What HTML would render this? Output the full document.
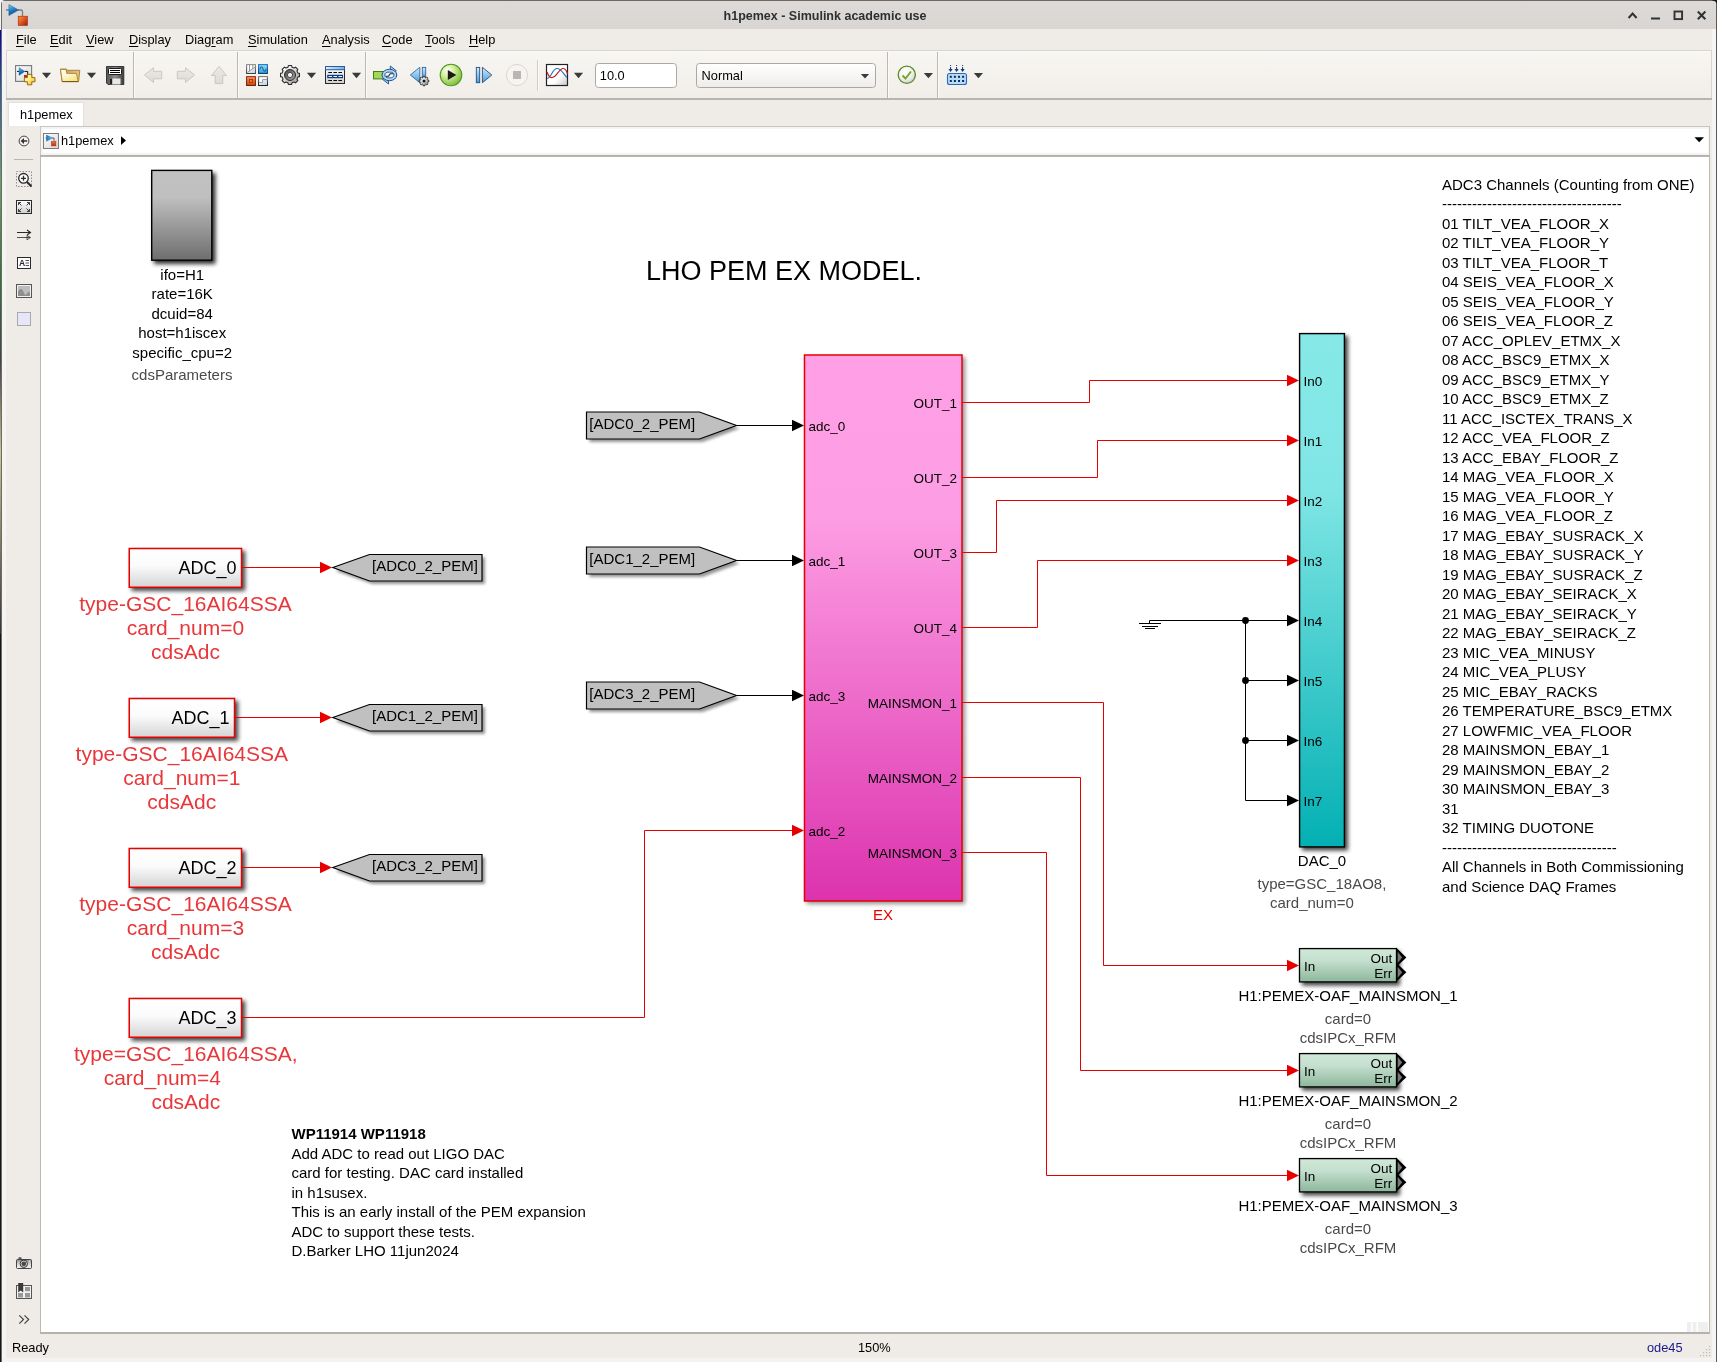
<!DOCTYPE html><html lang="en"><head><meta charset="utf-8"><title>h1pemex - Simulink academic use</title><style>
html,body{margin:0;padding:0;background:#efebe7;}
body{width:1717px;height:1362px;position:relative;overflow:hidden;font-family:"Liberation Sans",sans-serif;}
.abs{position:absolute;}
.ui{will-change:transform;font-family:"Liberation Sans",sans-serif;font-size:12.8px;color:#000;white-space:pre;line-height:16px;}
.ui u{text-decoration:underline;text-underline-offset:1.5px;text-decoration-thickness:1px;}
svg{position:absolute;left:0;top:0;overflow:visible;will-change:transform;}
svg text{font-family:"Liberation Sans",sans-serif;white-space:pre;}
</style></head><body>
<div class="abs" style="left:0px;top:0px;width:1717px;height:29px;background:linear-gradient(#dddad7,#d9d5d2);"></div>
<div class="abs ui" style="left:0;top:7.5px;width:1650px;text-align:center;font-weight:bold;font-size:12.5px;color:#2b3033;">h1pemex - Simulink academic use</div>
<div class="abs" style="left:0px;top:29px;width:1717px;height:22px;background:#efebe7;"></div>
<div class="abs ui" style="left:15.5px;top:31.5px;"><u>F</u>ile</div>
<div class="abs ui" style="left:49.800000000000004px;top:31.5px;"><u>E</u>dit</div>
<div class="abs ui" style="left:86.2px;top:31.5px;"><u>V</u>iew</div>
<div class="abs ui" style="left:128.7px;top:31.5px;"><u>D</u>isplay</div>
<div class="abs ui" style="left:185.0px;top:31.5px;">Diag<u>r</u>am</div>
<div class="abs ui" style="left:247.5px;top:31.5px;"><u>S</u>imulation</div>
<div class="abs ui" style="left:322.2px;top:31.5px;"><u>A</u>nalysis</div>
<div class="abs ui" style="left:382.2px;top:31.5px;"><u>C</u>ode</div>
<div class="abs ui" style="left:424.8px;top:31.5px;"><u>T</u>ools</div>
<div class="abs ui" style="left:469.4px;top:31.5px;"><u>H</u>elp</div>
<div class="abs" style="left:6px;top:50px;width:1706px;height:48px;background:linear-gradient(#f8f6f2,#f1eeea);border:1px solid #d8d4cf;border-bottom:none;box-sizing:border-box;"></div>
<div class="abs" style="left:7px;top:51px;width:1704px;height:1px;background:#fbfaf8;"></div>
<div class="abs" style="left:6px;top:98px;width:1706px;height:2px;background:#b8b4af;"></div>
<div class="abs" style="left:133px;top:52px;width:1px;height:46px;background:#bcb8b3;"></div>
<div class="abs" style="left:134px;top:52px;width:1px;height:46px;background:#fbfaf8;"></div>
<div class="abs" style="left:237px;top:52px;width:1px;height:46px;background:#bcb8b3;"></div>
<div class="abs" style="left:238px;top:52px;width:1px;height:46px;background:#fbfaf8;"></div>
<div class="abs" style="left:365px;top:52px;width:1px;height:46px;background:#bcb8b3;"></div>
<div class="abs" style="left:366px;top:52px;width:1px;height:46px;background:#fbfaf8;"></div>
<div class="abs" style="left:887px;top:52px;width:1px;height:46px;background:#bcb8b3;"></div>
<div class="abs" style="left:888px;top:52px;width:1px;height:46px;background:#fbfaf8;"></div>
<div class="abs" style="left:937px;top:52px;width:1px;height:46px;background:#bcb8b3;"></div>
<div class="abs" style="left:938px;top:52px;width:1px;height:46px;background:#fbfaf8;"></div>
<div class="abs" style="left:8px;top:102px;width:75.5px;height:24px;background:#fff;border:1px solid #e3e0dc;border-bottom:none;box-sizing:border-box;"></div>
<div class="abs ui" style="left:19.6px;top:107px;">h1pemex</div>
<div class="abs" style="left:40px;top:126px;width:1670px;height:29px;background:#f6f4f2;border:1px solid #c9c5c0;border-bottom:none;box-sizing:border-box;"></div>
<div class="abs" style="left:43px;top:129px;width:1665px;height:24px;background:#fff;"></div>
<div class="abs" style="left:40px;top:155px;width:1670px;height:2px;background:linear-gradient(#b3afaa,#b3afaa 70%,#d9d6d2);"></div>
<div class="abs ui" style="left:61px;top:133px;">h1pemex</div>
<div class="abs" style="left:6px;top:127px;width:34px;height:1207px;background:#efebe7;"></div>
<div class="abs" style="left:14px;top:159px;width:19px;height:1px;background:#b8b4af;"></div>
<div class="abs" style="left:40px;top:157px;width:1670px;height:1177px;background:#fff;border-left:1px solid #bdb9b4;border-right:1px solid #bdb9b4;border-bottom:2px solid #b5b1ac;box-sizing:border-box;"></div>
<div class="abs" style="left:0px;top:1335px;width:1717px;height:23px;background:#efebe7;"></div>
<div class="abs ui" style="left:12px;top:1339.5px;">Ready</div>
<div class="abs ui" style="left:858px;top:1339.5px;">150%</div>
<div class="abs ui" style="left:1647px;top:1339.5px;color:#1a1a8c;">ode45</div>
<div class="abs" style="left:0px;top:1358px;width:1717px;height:4px;background:#f4f3f1;"></div>
<div class="abs" style="left:1712px;top:29px;width:4px;height:1330px;background:#f6f5f3;"></div>
<div class="abs" style="left:1716px;top:0px;width:1px;height:1362px;background:#5c5a58;"></div>
<div class="abs" style="left:0px;top:0px;width:1717px;height:1px;background:#6b6966;"></div>
<div class="abs" style="left:0px;top:0px;width:1px;height:30px;background:#f4f4f4;"></div>
<div class="abs" style="left:0px;top:30px;width:1px;height:604px;background:linear-gradient(#0000b4,#2a5fa0 10%,#6fa06a 25%,#2f7a3a 40%,#444 55%,#c9c98a 70%,#333 100%);"></div>
<div class="abs" style="left:0px;top:634px;width:1px;height:728px;background:#151515;"></div>
<div class="abs" style="left:1px;top:0px;width:1px;height:1362px;background:#6e6c6a;"></div>
<div class="abs" style="left:2px;top:29px;width:4px;height:1330px;background:#f5f4f2;"></div>
<svg width="1717" height="1362" viewBox="0 0 1717 1362">
<defs>
<linearGradient id="gGray" x1="0" y1="0" x2="0" y2="1"><stop offset="0" stop-color="#c1c1c1"/><stop offset="0.3" stop-color="#bfbfbf"/><stop offset="1" stop-color="#6e6e6e"/></linearGradient>
<linearGradient id="gAdc" x1="0" y1="0" x2="0" y2="1"><stop offset="0" stop-color="#ffffff"/><stop offset="0.45" stop-color="#fbfbfb"/><stop offset="1" stop-color="#d4d4d4"/></linearGradient>
<linearGradient id="gPink" x1="0" y1="0" x2="0" y2="1"><stop offset="0" stop-color="#ffa0e6"/><stop offset="0.3" stop-color="#fd9de3"/><stop offset="1" stop-color="#dc33ae"/></linearGradient>
<linearGradient id="gCyan" x1="0" y1="0" x2="0" y2="1"><stop offset="0" stop-color="#86e9e8"/><stop offset="0.3" stop-color="#80e6e5"/><stop offset="1" stop-color="#03b0b3"/></linearGradient>
<linearGradient id="gGreen" x1="0" y1="0" x2="0" y2="1"><stop offset="0" stop-color="#cfe8d8"/><stop offset="0.35" stop-color="#c6e0cf"/><stop offset="1" stop-color="#8db79c"/></linearGradient>
<filter id="sh" x="-30%" y="-30%" width="170%" height="170%"><feGaussianBlur stdDeviation="1.9"/></filter>
<filter id="sh2" x="-20%" y="-30%" width="150%" height="180%"><feGaussianBlur stdDeviation="1.8"/></filter>
</defs>
<rect x="154" y="173" width="61.5" height="91" fill="#000" opacity="0.82" filter="url(#sh)"/>
<rect x="151.7" y="170.4" width="60.1" height="89.8" fill="url(#gGray)" stroke="#000" stroke-width="1.4"/>
<text x="182.2" y="279.75" font-size="15" fill="#000" text-anchor="middle">ifo=H1</text>
<text x="182.2" y="299.25" font-size="15" fill="#000" text-anchor="middle">rate=16K</text>
<text x="182.2" y="318.75" font-size="15" fill="#000" text-anchor="middle">dcuid=84</text>
<text x="182.2" y="338.25" font-size="15" fill="#000" text-anchor="middle">host=h1iscex</text>
<text x="182.2" y="357.75" font-size="15" fill="#000" text-anchor="middle">specific_cpu=2</text>
<text x="182" y="380" font-size="15" fill="#4a4a4a" text-anchor="middle">cdsParameters</text>
<text x="646" y="279.6" font-size="27" fill="#000" text-anchor="start">LHO PEM EX MODEL.</text>
<rect x="131.5" y="550.75" width="113.75" height="40.25" fill="#000" opacity="0.72" filter="url(#sh)"/>
<rect x="129.25" y="548.5" width="112.25" height="38.75" fill="url(#gAdc)" stroke="#e60000" stroke-width="1.5"/>
<text x="236.5" y="573.5" font-size="18" fill="#000" text-anchor="end">ADC_0</text>
<path d="M242 567.5H321" stroke="#e60000" stroke-width="1" fill="none"/>
<path d="M332 567.5L320 561.8V573.2Z" fill="#e60000"/>
<path d="M335.5 571.0L372.5 557.5H485V584.0H372.5Z" fill="#000" opacity="0.42" filter="url(#sh2)"/>
<path d="M332.8 567.5L369.5 554.5H482V581.0H369.5Z" fill="#c0c0c0" stroke="#000" stroke-width="1.2" stroke-linejoin="miter"/>
<text x="372" y="570.7" font-size="15" fill="#000" text-anchor="start">[ADC0_2_PEM]</text>
<text x="185.5" y="610.5" font-size="21" fill="#e8373a" text-anchor="middle">type-GSC_16AI64SSA</text>
<text x="185.5" y="634.5" font-size="21" fill="#e8373a" text-anchor="middle">card_num=0</text>
<text x="185.5" y="658.5" font-size="21" fill="#e8373a" text-anchor="middle">cdsAdc</text>
<rect x="131.5" y="700.75" width="106.75" height="40.25" fill="#000" opacity="0.72" filter="url(#sh)"/>
<rect x="129.25" y="698.5" width="105.25" height="38.75" fill="url(#gAdc)" stroke="#e60000" stroke-width="1.5"/>
<text x="229.5" y="723.5" font-size="18" fill="#000" text-anchor="end">ADC_1</text>
<path d="M235 717.5H321" stroke="#e60000" stroke-width="1" fill="none"/>
<path d="M332 717.5L320 711.8V723.2Z" fill="#e60000"/>
<path d="M335.5 721.0L372.5 707.5H485V734.0H372.5Z" fill="#000" opacity="0.42" filter="url(#sh2)"/>
<path d="M332.8 717.5L369.5 704.5H482V731.0H369.5Z" fill="#c0c0c0" stroke="#000" stroke-width="1.2" stroke-linejoin="miter"/>
<text x="372" y="720.7" font-size="15" fill="#000" text-anchor="start">[ADC1_2_PEM]</text>
<text x="181.8" y="760.5" font-size="21" fill="#e8373a" text-anchor="middle">type-GSC_16AI64SSA</text>
<text x="181.8" y="784.5" font-size="21" fill="#e8373a" text-anchor="middle">card_num=1</text>
<text x="181.8" y="808.5" font-size="21" fill="#e8373a" text-anchor="middle">cdsAdc</text>
<rect x="131.5" y="850.75" width="113.75" height="40.25" fill="#000" opacity="0.72" filter="url(#sh)"/>
<rect x="129.25" y="848.5" width="112.25" height="38.75" fill="url(#gAdc)" stroke="#e60000" stroke-width="1.5"/>
<text x="236.5" y="873.5" font-size="18" fill="#000" text-anchor="end">ADC_2</text>
<path d="M242 867.5H321" stroke="#e60000" stroke-width="1" fill="none"/>
<path d="M332 867.5L320 861.8V873.2Z" fill="#e60000"/>
<path d="M335.5 871.0L372.5 857.5H485V884.0H372.5Z" fill="#000" opacity="0.42" filter="url(#sh2)"/>
<path d="M332.8 867.5L369.5 854.5H482V881.0H369.5Z" fill="#c0c0c0" stroke="#000" stroke-width="1.2" stroke-linejoin="miter"/>
<text x="372" y="870.7" font-size="15" fill="#000" text-anchor="start">[ADC3_2_PEM]</text>
<text x="185.5" y="910.5" font-size="21" fill="#e8373a" text-anchor="middle">type-GSC_16AI64SSA</text>
<text x="185.5" y="934.5" font-size="21" fill="#e8373a" text-anchor="middle">card_num=3</text>
<text x="185.5" y="958.5" font-size="21" fill="#e8373a" text-anchor="middle">cdsAdc</text>
<rect x="131.5" y="1000.75" width="113.75" height="40.25" fill="#000" opacity="0.72" filter="url(#sh)"/>
<rect x="129.25" y="998.5" width="112.25" height="38.75" fill="url(#gAdc)" stroke="#e60000" stroke-width="1.5"/>
<text x="236.5" y="1023.5" font-size="18" fill="#000" text-anchor="end">ADC_3</text>
<text x="74" y="1060.5" font-size="21" fill="#e8373a" text-anchor="start">type=GSC_16AI64SSA,</text>
<text x="103.7" y="1084.5" font-size="21" fill="#e8373a" text-anchor="start">card_num=4</text>
<text x="151.4" y="1108.5" font-size="21" fill="#e8373a" text-anchor="start">cdsAdc</text>
<path d="M242 1017.5H644.5V830.5H793" stroke="#e60000" stroke-width="1" fill="none"/>
<path d="M804 830.5L792 824.8V836.2Z" fill="#e60000"/>
<path d="M589.5 415.0H702.5L739.5 428.5L702.5 442.0H589.5Z" fill="#000" opacity="0.42" filter="url(#sh2)"/>
<path d="M586.5 412.0H699.5L736.5 425.5L699.5 439.0H586.5Z" fill="#c0c0c0" stroke="#000" stroke-width="1.2"/>
<text x="589.3" y="428.7" font-size="15" fill="#000" text-anchor="start">[ADC0_2_PEM]</text>
<path d="M737 425.5H793" stroke="#000" stroke-width="1" fill="none"/>
<path d="M804 425.5L792 419.8V431.2Z" fill="#000"/>
<path d="M589.5 550.0H702.5L739.5 563.5L702.5 577.0H589.5Z" fill="#000" opacity="0.42" filter="url(#sh2)"/>
<path d="M586.5 547.0H699.5L736.5 560.5L699.5 574.0H586.5Z" fill="#c0c0c0" stroke="#000" stroke-width="1.2"/>
<text x="589.3" y="563.7" font-size="15" fill="#000" text-anchor="start">[ADC1_2_PEM]</text>
<path d="M737 560.5H793" stroke="#000" stroke-width="1" fill="none"/>
<path d="M804 560.5L792 554.8V566.2Z" fill="#000"/>
<path d="M589.5 685.0H702.5L739.5 698.5L702.5 712.0H589.5Z" fill="#000" opacity="0.42" filter="url(#sh2)"/>
<path d="M586.5 682.0H699.5L736.5 695.5L699.5 709.0H586.5Z" fill="#c0c0c0" stroke="#000" stroke-width="1.2"/>
<text x="589.3" y="698.7" font-size="15" fill="#000" text-anchor="start">[ADC3_2_PEM]</text>
<path d="M737 695.5H793" stroke="#000" stroke-width="1" fill="none"/>
<path d="M804 695.5L792 689.8V701.2Z" fill="#000"/>
<rect x="806.5" y="357.0" width="158.7" height="547" fill="#000" opacity="0.42" filter="url(#sh)"/>
<rect x="804.5" y="355" width="157.5" height="546" fill="url(#gPink)" stroke="#e60000" stroke-width="1.5"/>
<text x="808.5" y="431.0" font-size="13.5" fill="#000" text-anchor="start">adc_0</text>
<text x="808.5" y="566.0" font-size="13.5" fill="#000" text-anchor="start">adc_1</text>
<text x="808.5" y="701.0" font-size="13.5" fill="#000" text-anchor="start">adc_3</text>
<text x="808.5" y="836.0" font-size="13.5" fill="#000" text-anchor="start">adc_2</text>
<text x="957" y="408" font-size="13.5" fill="#000" text-anchor="end">OUT_1</text>
<text x="957" y="483" font-size="13.5" fill="#000" text-anchor="end">OUT_2</text>
<text x="957" y="558" font-size="13.5" fill="#000" text-anchor="end">OUT_3</text>
<text x="957" y="633" font-size="13.5" fill="#000" text-anchor="end">OUT_4</text>
<text x="957" y="708" font-size="13.5" fill="#000" text-anchor="end">MAINSMON_1</text>
<text x="957" y="783" font-size="13.5" fill="#000" text-anchor="end">MAINSMON_2</text>
<text x="957" y="858" font-size="13.5" fill="#000" text-anchor="end">MAINSMON_3</text>
<text x="883.1" y="920" font-size="15" fill="#e60000" text-anchor="middle">EX</text>
<rect x="1302" y="336" width="46" height="514.5" fill="#000" opacity="0.75" filter="url(#sh)"/>
<rect x="1299.6" y="333.6" width="44.8" height="513.3" fill="url(#gCyan)" stroke="#000" stroke-width="1.4"/>
<text x="1303.6" y="386.0" font-size="13.5" fill="#000" text-anchor="start">In0</text>
<path d="M1299 380.5L1287 374.8V386.2Z" fill="#e60000"/>
<text x="1303.6" y="446.0" font-size="13.5" fill="#000" text-anchor="start">In1</text>
<path d="M1299 440.5L1287 434.8V446.2Z" fill="#e60000"/>
<text x="1303.6" y="506.0" font-size="13.5" fill="#000" text-anchor="start">In2</text>
<path d="M1299 500.5L1287 494.8V506.2Z" fill="#e60000"/>
<text x="1303.6" y="566.0" font-size="13.5" fill="#000" text-anchor="start">In3</text>
<path d="M1299 560.5L1287 554.8V566.2Z" fill="#e60000"/>
<text x="1303.6" y="626.0" font-size="13.5" fill="#000" text-anchor="start">In4</text>
<path d="M1299 620.5L1287 614.8V626.2Z" fill="#000"/>
<text x="1303.6" y="686.0" font-size="13.5" fill="#000" text-anchor="start">In5</text>
<path d="M1299 680.5L1287 674.8V686.2Z" fill="#000"/>
<text x="1303.6" y="746.0" font-size="13.5" fill="#000" text-anchor="start">In6</text>
<path d="M1299 740.5L1287 734.8V746.2Z" fill="#000"/>
<text x="1303.6" y="806.0" font-size="13.5" fill="#000" text-anchor="start">In7</text>
<path d="M1299 800.5L1287 794.8V806.2Z" fill="#000"/>
<text x="1322" y="866" font-size="15" fill="#000" text-anchor="middle">DAC_0</text>
<text x="1257.5" y="889" font-size="15" fill="#4a4a4a" text-anchor="start">type=GSC_18AO8,</text>
<text x="1270" y="908" font-size="15" fill="#4a4a4a" text-anchor="start">card_num=0</text>
<path d="M962.5 402.5H1089.5V380.5H1288" stroke="#e60000" stroke-width="1" fill="none"/>
<path d="M962.5 477.5H1097.5V440.5H1288" stroke="#e60000" stroke-width="1" fill="none"/>
<path d="M962.5 552.5H996.5V500.5H1288" stroke="#e60000" stroke-width="1" fill="none"/>
<path d="M962.5 627.5H1037.5V560.5H1288" stroke="#e60000" stroke-width="1" fill="none"/>
<path d="M1149.5 623.5V620.5H1288 M1245.5 620.5V800.5H1288 M1245.5 680.5H1288 M1245.5 740.5H1288" stroke="#000" stroke-width="1" fill="none"/>
<path d="M1139 623.5H1161 M1142 626.5H1158 M1145 628.5H1155" stroke="#000" stroke-width="1" fill="none"/>
<circle cx="1245.5" cy="620.5" r="3.4" fill="#000"/>
<circle cx="1245.5" cy="680.5" r="3.4" fill="#000"/>
<circle cx="1245.5" cy="740.5" r="3.4" fill="#000"/>
<path d="M962.5 702.5H1103.5V965.5H1288" stroke="#e60000" stroke-width="1" fill="none"/>
<path d="M1299 965.5L1287 959.8V971.2Z" fill="#e60000"/>
<rect x="1302" y="951" width="98" height="34.5" fill="#000" opacity="0.75" filter="url(#sh)"/>
<path d="M1396 947.6L1406.4 957.4L1396 967.1999999999999Z" fill="#000"/>
<path d="M1397.6 951.8L1402.2 957.4L1397.6 963.0Z" fill="#777"/>
<path d="M1396 962.5L1406.4 972.3L1396 982.0999999999999Z" fill="#000"/>
<path d="M1397.6 966.6999999999999L1402.2 972.3L1397.6 977.9Z" fill="#777"/>
<rect x="1299.5" y="948.6" width="97" height="33.3" fill="url(#gGreen)" stroke="#000" stroke-width="1.3"/>
<text x="1304" y="970.5" font-size="13.5" fill="#000" text-anchor="start">In</text>
<text x="1392.3" y="962.6" font-size="13.5" fill="#000" text-anchor="end">Out</text>
<text x="1392.3" y="977.6" font-size="13.5" fill="#000" text-anchor="end">Err</text>
<text x="1348" y="1000.5" font-size="15" fill="#000" text-anchor="middle">H1:PEMEX-OAF_MAINSMON_1</text>
<text x="1348" y="1023.5" font-size="15" fill="#4a4a4a" text-anchor="middle">card=0</text>
<text x="1348" y="1043" font-size="15" fill="#4a4a4a" text-anchor="middle">cdsIPCx_RFM</text>
<path d="M962.5 777.5H1080.5V1070.5H1288" stroke="#e60000" stroke-width="1" fill="none"/>
<path d="M1299 1070.5L1287 1064.8V1076.2Z" fill="#e60000"/>
<rect x="1302" y="1056" width="98" height="34.5" fill="#000" opacity="0.75" filter="url(#sh)"/>
<path d="M1396 1052.6000000000001L1406.4 1062.4L1396 1072.2Z" fill="#000"/>
<path d="M1397.6 1056.8000000000002L1402.2 1062.4L1397.6 1068.0Z" fill="#777"/>
<path d="M1396 1067.5L1406.4 1077.3L1396 1087.1Z" fill="#000"/>
<path d="M1397.6 1071.7L1402.2 1077.3L1397.6 1082.8999999999999Z" fill="#777"/>
<rect x="1299.5" y="1053.6" width="97" height="33.3" fill="url(#gGreen)" stroke="#000" stroke-width="1.3"/>
<text x="1304" y="1075.5" font-size="13.5" fill="#000" text-anchor="start">In</text>
<text x="1392.3" y="1067.6" font-size="13.5" fill="#000" text-anchor="end">Out</text>
<text x="1392.3" y="1082.6" font-size="13.5" fill="#000" text-anchor="end">Err</text>
<text x="1348" y="1105.5" font-size="15" fill="#000" text-anchor="middle">H1:PEMEX-OAF_MAINSMON_2</text>
<text x="1348" y="1128.5" font-size="15" fill="#4a4a4a" text-anchor="middle">card=0</text>
<text x="1348" y="1148" font-size="15" fill="#4a4a4a" text-anchor="middle">cdsIPCx_RFM</text>
<path d="M962.5 852.5H1046.5V1175.5H1288" stroke="#e60000" stroke-width="1" fill="none"/>
<path d="M1299 1175.5L1287 1169.8V1181.2Z" fill="#e60000"/>
<rect x="1302" y="1161" width="98" height="34.5" fill="#000" opacity="0.75" filter="url(#sh)"/>
<path d="M1396 1157.6000000000001L1406.4 1167.4L1396 1177.2Z" fill="#000"/>
<path d="M1397.6 1161.8000000000002L1402.2 1167.4L1397.6 1173.0Z" fill="#777"/>
<path d="M1396 1172.5L1406.4 1182.3L1396 1192.1Z" fill="#000"/>
<path d="M1397.6 1176.7L1402.2 1182.3L1397.6 1187.8999999999999Z" fill="#777"/>
<rect x="1299.5" y="1158.6" width="97" height="33.3" fill="url(#gGreen)" stroke="#000" stroke-width="1.3"/>
<text x="1304" y="1180.5" font-size="13.5" fill="#000" text-anchor="start">In</text>
<text x="1392.3" y="1172.6" font-size="13.5" fill="#000" text-anchor="end">Out</text>
<text x="1392.3" y="1187.6" font-size="13.5" fill="#000" text-anchor="end">Err</text>
<text x="1348" y="1210.5" font-size="15" fill="#000" text-anchor="middle">H1:PEMEX-OAF_MAINSMON_3</text>
<text x="1348" y="1233.5" font-size="15" fill="#4a4a4a" text-anchor="middle">card=0</text>
<text x="1348" y="1253" font-size="15" fill="#4a4a4a" text-anchor="middle">cdsIPCx_RFM</text>
<text x="1442" y="189.75" font-size="15" fill="#000" text-anchor="start">ADC3 Channels (Counting from ONE)</text>
<text x="1442" y="209.25" font-size="15" fill="#000" text-anchor="start">------------------------------------</text>
<text x="1442" y="228.75" font-size="15" fill="#000" text-anchor="start">01 TILT_VEA_FLOOR_X</text>
<text x="1442" y="248.25" font-size="15" fill="#000" text-anchor="start">02 TILT_VEA_FLOOR_Y</text>
<text x="1442" y="267.75" font-size="15" fill="#000" text-anchor="start">03 TILT_VEA_FLOOR_T</text>
<text x="1442" y="287.25" font-size="15" fill="#000" text-anchor="start">04 SEIS_VEA_FLOOR_X</text>
<text x="1442" y="306.75" font-size="15" fill="#000" text-anchor="start">05 SEIS_VEA_FLOOR_Y</text>
<text x="1442" y="326.25" font-size="15" fill="#000" text-anchor="start">06 SEIS_VEA_FLOOR_Z</text>
<text x="1442" y="345.75" font-size="15" fill="#000" text-anchor="start">07 ACC_OPLEV_ETMX_X</text>
<text x="1442" y="365.25" font-size="15" fill="#000" text-anchor="start">08 ACC_BSC9_ETMX_X</text>
<text x="1442" y="384.75" font-size="15" fill="#000" text-anchor="start">09 ACC_BSC9_ETMX_Y</text>
<text x="1442" y="404.25" font-size="15" fill="#000" text-anchor="start">10 ACC_BSC9_ETMX_Z</text>
<text x="1442" y="423.75" font-size="15" fill="#000" text-anchor="start">11 ACC_ISCTEX_TRANS_X</text>
<text x="1442" y="443.25" font-size="15" fill="#000" text-anchor="start">12 ACC_VEA_FLOOR_Z</text>
<text x="1442" y="462.75" font-size="15" fill="#000" text-anchor="start">13 ACC_EBAY_FLOOR_Z</text>
<text x="1442" y="482.25" font-size="15" fill="#000" text-anchor="start">14 MAG_VEA_FLOOR_X</text>
<text x="1442" y="501.75" font-size="15" fill="#000" text-anchor="start">15 MAG_VEA_FLOOR_Y</text>
<text x="1442" y="521.25" font-size="15" fill="#000" text-anchor="start">16 MAG_VEA_FLOOR_Z</text>
<text x="1442" y="540.75" font-size="15" fill="#000" text-anchor="start">17 MAG_EBAY_SUSRACK_X</text>
<text x="1442" y="560.25" font-size="15" fill="#000" text-anchor="start">18 MAG_EBAY_SUSRACK_Y</text>
<text x="1442" y="579.75" font-size="15" fill="#000" text-anchor="start">19 MAG_EBAY_SUSRACK_Z</text>
<text x="1442" y="599.25" font-size="15" fill="#000" text-anchor="start">20 MAG_EBAY_SEIRACK_X</text>
<text x="1442" y="618.75" font-size="15" fill="#000" text-anchor="start">21 MAG_EBAY_SEIRACK_Y</text>
<text x="1442" y="638.25" font-size="15" fill="#000" text-anchor="start">22 MAG_EBAY_SEIRACK_Z</text>
<text x="1442" y="657.75" font-size="15" fill="#000" text-anchor="start">23 MIC_VEA_MINUSY</text>
<text x="1442" y="677.25" font-size="15" fill="#000" text-anchor="start">24 MIC_VEA_PLUSY</text>
<text x="1442" y="696.75" font-size="15" fill="#000" text-anchor="start">25 MIC_EBAY_RACKS</text>
<text x="1442" y="716.25" font-size="15" fill="#000" text-anchor="start">26 TEMPERATURE_BSC9_ETMX</text>
<text x="1442" y="735.75" font-size="15" fill="#000" text-anchor="start">27 LOWFMIC_VEA_FLOOR</text>
<text x="1442" y="755.25" font-size="15" fill="#000" text-anchor="start">28 MAINSMON_EBAY_1</text>
<text x="1442" y="774.75" font-size="15" fill="#000" text-anchor="start">29 MAINSMON_EBAY_2</text>
<text x="1442" y="794.25" font-size="15" fill="#000" text-anchor="start">30 MAINSMON_EBAY_3</text>
<text x="1442" y="813.75" font-size="15" fill="#000" text-anchor="start">31</text>
<text x="1442" y="833.25" font-size="15" fill="#000" text-anchor="start">32 TIMING DUOTONE</text>
<text x="1442" y="852.75" font-size="15" fill="#000" text-anchor="start">-----------------------------------</text>
<text x="1442" y="872.25" font-size="15" fill="#000" text-anchor="start">All Channels in Both Commissioning</text>
<text x="1442" y="891.75" font-size="15" fill="#000" text-anchor="start">and Science DAQ Frames</text>
<text x="291.5" y="1139.1" font-size="15" fill="#000" text-anchor="start" font-weight="bold">WP11914 WP11918</text>
<text x="291.5" y="1158.6" font-size="15" fill="#000" text-anchor="start">Add ADC to read out LIGO DAC</text>
<text x="291.5" y="1178.1" font-size="15" fill="#000" text-anchor="start">card for testing. DAC card installed</text>
<text x="291.5" y="1197.6" font-size="15" fill="#000" text-anchor="start">in h1susex.</text>
<text x="291.5" y="1217.1" font-size="15" fill="#000" text-anchor="start">This is an early install of the PEM expansion</text>
<text x="291.5" y="1236.6" font-size="15" fill="#000" text-anchor="start">ADC to support these tests.</text>
<text x="291.5" y="1256.1" font-size="15" fill="#000" text-anchor="start">D.Barker LHO 11jun2024</text>
<rect x="1687" y="1322" width="4" height="10" fill="#efefef"/><rect x="1692.5" y="1322" width="4" height="10" fill="#efefef"/><rect x="1698" y="1322" width="10" height="10" fill="#efefef"/>
</svg>
<svg width="1717" height="1362" viewBox="0 0 1717 1362">
<defs>
<linearGradient id="iPaper" x1="0" y1="0" x2="1" y2="1"><stop offset="0" stop-color="#ffffff"/><stop offset="1" stop-color="#d6d6d6"/></linearGradient>
<linearGradient id="iBlue" x1="0" y1="0" x2="1" y2="0"><stop offset="0" stop-color="#1b6fb8"/><stop offset="0.5" stop-color="#3ea0e0"/><stop offset="1" stop-color="#8fd0f5"/></linearGradient>
<linearGradient id="iBlueV" x1="0" y1="0" x2="0" y2="1"><stop offset="0" stop-color="#d4ecfb"/><stop offset="1" stop-color="#4a9ad8"/></linearGradient>
<linearGradient id="iRed" x1="0" y1="0" x2="0" y2="1"><stop offset="0" stop-color="#f0703a"/><stop offset="1" stop-color="#c62f08"/></linearGradient>
<linearGradient id="iBlueApp" x1="0.1" y1="0" x2="0.5" y2="1"><stop offset="0" stop-color="#72ccf2"/><stop offset="0.5" stop-color="#2080c8"/><stop offset="1" stop-color="#0b3c7c"/></linearGradient>
<linearGradient id="iRedApp" x1="0" y1="0" x2="1" y2="1"><stop offset="0" stop-color="#f0963c"/><stop offset="0.4" stop-color="#e8622a"/><stop offset="1" stop-color="#a01c00"/></linearGradient>
<linearGradient id="iBdG" x1="0" y1="0" x2="0" y2="1"><stop offset="0" stop-color="#909090"/><stop offset="1" stop-color="#3a3a3a"/></linearGradient>
<linearGradient id="iBdG2" x1="0" y1="0" x2="0" y2="1"><stop offset="0" stop-color="#7a7a7a"/><stop offset="1" stop-color="#141414"/></linearGradient>
<linearGradient id="iBdB" x1="0" y1="0" x2="0" y2="1"><stop offset="0" stop-color="#2078c8"/><stop offset="1" stop-color="#083878"/></linearGradient>
<linearGradient id="iBdR" x1="0" y1="0" x2="0" y2="1"><stop offset="0" stop-color="#a83010"/><stop offset="1" stop-color="#6a1c00"/></linearGradient>
<linearGradient id="iSky" x1="0" y1="0" x2="0" y2="1"><stop offset="0" stop-color="#9cdcf4"/><stop offset="1" stop-color="#2ca2d4"/></linearGradient>
<linearGradient id="iOr" x1="0" y1="0" x2="0" y2="1"><stop offset="0" stop-color="#f09868"/><stop offset="1" stop-color="#e0480e"/></linearGradient>
<linearGradient id="iLBlue" x1="0" y1="0" x2="1" y2="1"><stop offset="0" stop-color="#ffffff"/><stop offset="1" stop-color="#b4d2ea"/></linearGradient>
<linearGradient id="iHdr" x1="0" y1="0" x2="1" y2="0"><stop offset="0" stop-color="#dcf2ff"/><stop offset="1" stop-color="#6cb0e2"/></linearGradient>
<linearGradient id="iYel" x1="0" y1="0" x2="1" y2="1"><stop offset="0" stop-color="#fffce0"/><stop offset="0.45" stop-color="#ffee80"/><stop offset="1" stop-color="#eeb01c"/></linearGradient>
<linearGradient id="iFold" x1="0" y1="0" x2="0.6" y2="1"><stop offset="0" stop-color="#ffffff"/><stop offset="0.4" stop-color="#fffbe0"/><stop offset="1" stop-color="#f6e588"/></linearGradient>
<linearGradient id="iFoldBack" x1="0" y1="0" x2="1" y2="0.3"><stop offset="0" stop-color="#c49450"/><stop offset="1" stop-color="#e4c490"/></linearGradient>
<linearGradient id="iFlop" x1="0" y1="0" x2="1" y2="0"><stop offset="0" stop-color="#555"/><stop offset="0.5" stop-color="#8a8a8a"/><stop offset="1" stop-color="#3c3c3c"/></linearGradient>
<linearGradient id="iDis" x1="0" y1="0" x2="0" y2="1"><stop offset="0" stop-color="#ebe9e6"/><stop offset="1" stop-color="#dddad7"/></linearGradient>
<radialGradient id="iGreen" cx="0.35" cy="0.3" r="0.8"><stop offset="0" stop-color="#ffffff"/><stop offset="0.35" stop-color="#d8f0a0"/><stop offset="1" stop-color="#6db52a"/></radialGradient>
<radialGradient id="iChk" cx="0.4" cy="0.35" r="0.7"><stop offset="0" stop-color="#ffffff"/><stop offset="0.6" stop-color="#f0f0f0"/><stop offset="1" stop-color="#c8c8c8"/></radialGradient>
<linearGradient id="iGear" x1="0" y1="0" x2="1" y2="1"><stop offset="0" stop-color="#4a4a4a"/><stop offset="1" stop-color="#a8a8a8"/></linearGradient>
<linearGradient id="iGearBody" x1="0" y1="0" x2="1" y2="1"><stop offset="0" stop-color="#ffffff"/><stop offset="0.4" stop-color="#e8e8e8"/><stop offset="1" stop-color="#8e8e8e"/></linearGradient>
<linearGradient id="iScope" x1="0" y1="0" x2="1" y2="1"><stop offset="0" stop-color="#ffffff"/><stop offset="0.6" stop-color="#ffffff"/><stop offset="1" stop-color="#c4c4c4"/></linearGradient>
<linearGradient id="iCombo" x1="0" y1="0" x2="0" y2="1"><stop offset="0" stop-color="#ffffff"/><stop offset="1" stop-color="#efedea"/></linearGradient>
<linearGradient id="iLG" x1="0" y1="0" x2="0" y2="1"><stop offset="0" stop-color="#ffffff"/><stop offset="1" stop-color="#cfcfcf"/></linearGradient>
<linearGradient id="iCam" x1="0" y1="0" x2="0" y2="1"><stop offset="0" stop-color="#888"/><stop offset="0.5" stop-color="#d8d8d8"/><stop offset="1" stop-color="#f4f4f4"/></linearGradient>
</defs>
<path d="M6 10H9 M18 10H21Q22.5 10 22.5 11.5V16" stroke="#7c7c7c" stroke-width="1.3" fill="none"/>
<path d="M8.9 4.6L18.6 10L8.9 15.6Z" fill="url(#iBlueApp)" stroke="#1a5fa0" stroke-width="0.5"/>
<rect x="18.2" y="16.2" width="9.2" height="9.2" fill="url(#iRedApp)" stroke="#9a2806" stroke-width="0.6"/>
<path d="M1712.5 0H1717V4.5C1716.6 2.2 1715.2 1 1712.5 0.8Z" fill="#141926"/>
<path d="M0 0H4.5C2.2 0.6 1.2 1.8 0.9 4.5H0Z" fill="#f4f4f4"/>
<path d="M1628.6 18L1632.6 13.6L1636.6 18" stroke="#2e3436" stroke-width="2" fill="none"/>
<rect x="1651" y="17.5" width="9" height="2" fill="#2e3436"/>
<rect x="1674.5" y="11.5" width="7.6" height="7.6" fill="none" stroke="#2e3436" stroke-width="1.9"/>
<path d="M1697.8 11.5L1705.4 19.2 M1705.4 11.5L1697.8 19.2" stroke="#2e3436" stroke-width="2" fill="none"/>
<rect x="15.6" y="65.6" width="16" height="15.8" fill="url(#iPaper)" stroke="#777" stroke-width="1.1"/>
<path d="M17 71.4H19.5 M24.5 71.4H27.7V75.5" stroke="#111" stroke-width="1" fill="none"/>
<path d="M19 67.5L24.7 71.4L19 75.4Z" fill="url(#iBlueApp)" stroke="#155a9c" stroke-width="0.4"/>
<rect x="24" y="75" width="3.4" height="3.2" fill="#c8281a"/>
<path d="M27.4 74.4H31.8V77.6H35V81.8H31.8V84.8H27.4V81.8H24.4V77.6H27.4Z" fill="url(#iYel)" stroke="#8c5e0a" stroke-width="0.9"/>
<path d="M41.9 72.8H51.1L46.5 78.2Z" fill="#3a3a3a"/>
<path d="M60.4 69H66.4L67 70.3H79.8L78.6 81.6H62.1Z" fill="url(#iFoldBack)" stroke="#a87a2c" stroke-width="0.9" stroke-linejoin="round"/>
<path d="M60.5 69.5H66.1L66.8 73.4H76.4L78.3 81.5H62.3Z" fill="url(#iFold)" stroke="#b08424" stroke-width="0.9" stroke-linejoin="round"/>
<path d="M62.3 81.6H78.4" stroke="#6e4e0c" stroke-width="0.9"/>
<path d="M86.9 72.8H96.1L91.5 78.2Z" fill="#3a3a3a"/>
<path d="M106.5 66.5H123.8V84.5H108L106.5 83Z" fill="url(#iFlop)" stroke="#2a2a2a" stroke-width="0.9"/>
<rect x="108.5" y="68.5" width="13" height="6" rx="0.8" fill="#fff" stroke="#1a1a1a" stroke-width="1"/>
<rect x="110" y="70" width="10" height="1" fill="#000"/><rect x="110" y="72" width="10" height="1" fill="#000"/>
<rect x="110" y="78.5" width="10.5" height="6" fill="#e8e8e8"/>
<rect x="110" y="78.5" width="2.2" height="6" fill="#222"/>
<path d="M144.5 75L153.5 67.8V71.3H161.7V78.8H153.5V82.4Z" fill="url(#iDis)" stroke="#c6c3bf" stroke-width="0.9"/>
<path d="M194.5 75L185.5 67.8V71.3H177.3V78.8H185.5V82.4Z" fill="url(#iDis)" stroke="#c6c3bf" stroke-width="0.9"/>
<path d="M219 66.5L226.5 75.5H222.8V83.6H215.2V75.5H211.5Z" fill="url(#iDis)" stroke="#c6c3bf" stroke-width="0.9"/>
<rect x="246.6" y="64.6" width="8.8" height="8.8" fill="#fff" stroke="url(#iBdG)" stroke-width="1.1"/>
<path d="M247.4 72.6L254.9 67.2V72.9H247.4Z" fill="url(#iLBlue)"/>
<path d="M249.5 65V71.2 M252.8 65V68.8 M247.6 72.3L254.8 67.2" stroke="#8a8a8a" stroke-width="0.9" fill="none"/>
<rect x="258.6" y="64.6" width="8.8" height="8.8" fill="url(#iSky)" stroke="url(#iBdB)" stroke-width="1.1"/>
<path d="M260 69.3C260.6 66 262.3 66 263 69S265.4 72 266.2 69" stroke="#0a68a8" stroke-width="1.1" fill="none"/>
<rect x="246.6" y="76.6" width="8.8" height="8.8" fill="url(#iOr)" stroke="url(#iBdR)" stroke-width="1.1"/>
<rect x="249.4" y="79.4" width="3.2" height="3.2" fill="#f07838" stroke="#a03404" stroke-width="0.9"/>
<rect x="258.6" y="76.6" width="8.8" height="8.8" fill="#fff" stroke="url(#iBdG2)" stroke-width="1.1"/>
<path d="M259.2 82.6H262.6V79.6H266.9V84.9H259.2Z" fill="url(#iLBlue)"/>
<path d="M259.2 82.6H262.6V79.6H266.9" stroke="#8a8a8a" stroke-width="0.9" fill="none"/>
<path d="M288.35 65.54 L291.65 65.54 L292.01 67.15 L294.12 68.03 L295.52 67.15 L297.85 69.48 L296.97 70.88 L297.85 72.99 L299.46 73.35 L299.46 76.65 L297.85 77.01 L296.97 79.12 L297.85 80.52 L295.52 82.85 L294.12 81.97 L292.01 82.85 L291.65 84.46 L288.35 84.46 L287.99 82.85 L285.88 81.97 L284.48 82.85 L282.15 80.52 L283.03 79.12 L282.15 77.01 L280.54 76.65 L280.54 73.35 L282.15 72.99 L283.03 70.88 L282.15 69.48 L284.48 67.15 L285.88 68.03 L287.99 67.15Z" fill="url(#iGearBody)" stroke="#2c2c2c" stroke-width="1.1" stroke-linejoin="round"/>
<circle cx="290" cy="75" r="5.5" fill="url(#iGear)" stroke="#2a2a2a" stroke-width="1"/>
<circle cx="290" cy="75" r="2.6" fill="#f4f2ef" stroke="#3a3a3a" stroke-width="0.9"/>
<path d="M306.9 72.8H316.1L311.5 78.2Z" fill="#3a3a3a"/>
<rect x="325.5" y="66.5" width="19" height="17" fill="url(#iLG)" stroke="#2a2a2a" stroke-width="1"/>
<rect x="325.5" y="66.5" width="19" height="3.2" fill="url(#iHdr)" stroke="#2c5c9c" stroke-width="1"/>
<path d="M328.3 72.5H332 M333.4 72.5H337 M338.4 72.5H342 M328.3 80.5H332 M333.4 80.5H337 M338.4 80.5H342" stroke="#0a0a0a" stroke-width="1.1"/>
<rect x="327.2" y="74.8" width="15.8" height="3.4" fill="#0e3e80"/>
<path d="M328.5 76.5H332 M333.5 76.5H337 M338.5 76.5H342" stroke="#e8f2ff" stroke-width="1"/>
<path d="M351.9 72.8H361.1L356.5 78.2Z" fill="#3a3a3a"/>
<rect x="373.5" y="71.5" width="10" height="7.4" fill="#a4d658" stroke="#3f7f1c" stroke-width="1"/>
<path d="M390.3 66L396.4 70.8L390.3 73.2Z" fill="#a8d0f0" stroke="#1c4f88" stroke-width="0.9" stroke-linejoin="round"/>
<path d="M388.5 84L382.4 79.2L388.5 76.8Z" fill="#a8d0f0" stroke="#1c4f88" stroke-width="0.9" stroke-linejoin="round"/>
<ellipse cx="389.4" cy="75" rx="7.4" ry="5.7" fill="#b4d6f2" stroke="#1c4f88" stroke-width="1"/>
<ellipse cx="389.4" cy="75" rx="4.6" ry="2.9" fill="#f6f8fb" stroke="#1c4f88" stroke-width="0.9"/>
<path d="M385.6 76.3H388.6L390.2 73.7H393.2" stroke="#0e2f58" stroke-width="1.1" fill="none"/>
<path d="M410.3 75L419.8 67.3V82.7Z" fill="url(#iBlueV)" stroke="#2a6aa8" stroke-width="0.9"/>
<rect x="422.3" y="67.4" width="3.4" height="11" fill="url(#iBlueV)" stroke="#2a6aa8" stroke-width="0.9"/>
<path d="M423.16 76.17 L424.84 76.17 L424.90 77.51 L425.83 77.90 L426.82 76.99 L428.01 78.18 L427.10 79.17 L427.49 80.10 L428.83 80.16 L428.83 81.84 L427.49 81.90 L427.10 82.83 L428.01 83.82 L426.82 85.01 L425.83 84.10 L424.90 84.49 L424.84 85.83 L423.16 85.83 L423.10 84.49 L422.17 84.10 L421.18 85.01 L419.99 83.82 L420.90 82.83 L420.51 81.90 L419.17 81.84 L419.17 80.16 L420.51 80.10 L420.90 79.17 L419.99 78.18 L421.18 76.99 L422.17 77.90 L423.10 77.51Z" fill="url(#iGearBody)" stroke="#2c2c2c" stroke-width="0.9" stroke-linejoin="round"/>
<circle cx="424" cy="81" r="1.5" fill="#151515"/>
<circle cx="451" cy="75" r="10.8" fill="url(#iGreen)" stroke="#4f9a22" stroke-width="1.1"/>
<path d="M447.8 70L456.3 75L447.8 80Z" fill="#1a1a1a"/>
<rect x="476.3" y="67.4" width="3.4" height="15.3" fill="url(#iBlueV)" stroke="#1f4f80" stroke-width="0.9"/>
<path d="M482.4 67.3L491.8 75L482.4 82.7Z" fill="url(#iBlueV)" stroke="#1f4f80" stroke-width="0.9"/>
<circle cx="517" cy="75" r="10.6" fill="#f6f4f1" stroke="#d9d6d2" stroke-width="1"/>
<rect x="513" y="71" width="8" height="8" fill="#b9b6b3"/>
<rect x="537" y="60" width="1" height="31" fill="#d0cdc9"/><rect x="538" y="60" width="1" height="31" fill="#fbfaf9"/>
<rect x="546.5" y="64.5" width="21" height="21" fill="url(#iScope)" stroke="#222" stroke-width="1.2"/>
<path d="M547 78.5C551 78.5 552.5 68.5 557 68.5S563.5 74.5 567 77.5" stroke="#1f78c8" stroke-width="1.2" fill="none"/>
<path d="M547 72C549 78 551.5 78.5 554.5 76.5S560 68.5 563 68.5S566.5 71 567.5 74" stroke="#c8201c" stroke-width="1.2" fill="none"/>
<path d="M573.9 72.8H583.1L578.5 78.2Z" fill="#3a3a3a"/>
<rect x="595.5" y="63.5" width="81" height="24" rx="3" fill="#fff" stroke="#aba7a2" stroke-width="1"/>
<rect x="696.5" y="63.5" width="179" height="24" rx="3" fill="url(#iCombo)" stroke="#aba7a2" stroke-width="1"/>
<path d="M860.9 74.0H869.1L865 78.4Z" fill="#3a3a3a"/>
<text x="599.8" y="79.8" font-size="12.8" fill="#000">10.0</text><text x="701.6" y="79.8" font-size="12.8" fill="#000">Normal</text>
<circle cx="906.8" cy="74.8" r="8.6" fill="url(#iChk)" stroke="#5c8a20" stroke-width="1.3"/>
<path d="M902.5 75.5L905.5 78.5L911 71.5" stroke="#76a82e" stroke-width="2" fill="none"/>
<path d="M923.8 73.0H933.0L928.4 78.19999999999999Z" fill="#3a3a3a"/>
<rect x="947.5" y="73.5" width="19" height="11" rx="2" fill="#b8dcf8" stroke="#2a6cb4" stroke-width="1.1"/>
<rect x="949.8" y="75.8" width="2" height="2" fill="#0c2c5c"/>
<rect x="949.8" y="80.0" width="2" height="2" fill="#0c2c5c"/>
<rect x="953.9" y="75.8" width="2" height="2" fill="#0c2c5c"/>
<rect x="953.9" y="80.0" width="2" height="2" fill="#0c2c5c"/>
<rect x="958.0" y="75.8" width="2" height="2" fill="#0c2c5c"/>
<rect x="958.0" y="80.0" width="2" height="2" fill="#0c2c5c"/>
<rect x="962.1" y="75.8" width="2" height="2" fill="#0c2c5c"/>
<rect x="962.1" y="80.0" width="2" height="2" fill="#0c2c5c"/>
<path d="M950.6 65V66 M950.6 67V70" stroke="#0c3c78" stroke-width="1"/><path d="M948.5 69H952.7L950.6 72Z" fill="#0c3c78"/>
<path d="M956.6 65V66 M956.6 67V70" stroke="#0c3c78" stroke-width="1"/><path d="M954.5 69H958.7L956.6 72Z" fill="#0c3c78"/>
<path d="M962.6 65V66 M962.6 67V70" stroke="#0c3c78" stroke-width="1"/><path d="M960.5 69H964.7L962.6 72Z" fill="#0c3c78"/>
<path d="M973.8 73.0H983.0L978.4 78.19999999999999Z" fill="#3a3a3a"/>
<circle cx="24" cy="141" r="4.9" fill="#f4f2ef" stroke="#444" stroke-width="1"/>
<path d="M20.6 141L24 138V140.2H27.2V141.8H24V144Z" fill="#333"/>
<rect x="43.5" y="133.5" width="15" height="15" fill="url(#iPaper)" stroke="#7a7a7a" stroke-width="1"/>
<path d="M45.5 138H47 M52 138H54V141" stroke="#444" stroke-width="0.8" fill="none"/>
<path d="M46.5 135L52.5 138L46.5 141.2Z" fill="url(#iBlue)" stroke="#155a9c" stroke-width="0.4"/>
<rect x="51.5" y="141.5" width="4.4" height="4.4" fill="url(#iRed)" stroke="#a82c08" stroke-width="0.5"/>
<path d="M121 136.2L126 140.6L121 145Z" fill="#000"/>
<path d="M1694.5 137.3H1704L1699.2 142.3Z" fill="#000"/>
<rect x="16.5" y="171.5" width="15" height="15" fill="none" stroke="#777" stroke-width="0.8" stroke-dasharray="1.5 1.5"/>
<circle cx="23.5" cy="178.3" r="4.8" fill="#fff" stroke="#2a2a2a" stroke-width="1.3"/>
<path d="M21 178.3H26 M23.5 175.8V180.8" stroke="#2a2a2a" stroke-width="1.3"/><path d="M27 182L31.5 186.5" stroke="#2a2a2a" stroke-width="2"/>
<rect x="16.5" y="200.5" width="15" height="13" fill="url(#iLG)" stroke="#2a2a2a" stroke-width="1"/>
<path d="M18.5 205V202.5H21 M18.8 202.8L21.5 205.5 M29.5 205V202.5H27 M29.2 202.8L26.5 205.5 M18.5 209V211.5H21 M18.8 211.2L21.5 208.5 M29.5 209V211.5H27 M29.2 211.2L26.5 208.5" stroke="#2a2a2a" stroke-width="0.9" fill="none"/>
<path d="M17 232.5H30 M27 230L30.5 232.5L27 235" stroke="#2a2a2a" stroke-width="1.1" fill="none"/>
<path d="M17 237.5H30 M27 235.5L30.5 237.5L27 239.8Z" stroke="#2a2a2a" stroke-width="0.8" fill="#fff"/>
<rect x="17.5" y="257.5" width="13" height="11" fill="#fff" stroke="#2a2a2a" stroke-width="1"/>
<text x="19" y="266.3" font-size="8.5" font-weight="bold" fill="#2a2a2a" font-family="Liberation Sans, sans-serif">A</text>
<path d="M25.5 260.5H29 M25.5 263H29 M25.5 265.5H29" stroke="#2a2a2a" stroke-width="0.8"/>
<rect x="16.5" y="284.5" width="15" height="13" fill="#f0f0f0" stroke="#555" stroke-width="1"/>
<rect x="18" y="286" width="12" height="10" fill="#bdbdbd"/>
<path d="M18 296V292C19.5 288 22 288 23.5 292S26 295 27.5 293S29 292 30 293V296Z" fill="#8e8e8e"/>
<rect x="17.5" y="312.5" width="13" height="13" fill="#e6e6fa" stroke="#a8a8a8" stroke-width="1"/>
<rect x="16.5" y="1259.5" width="15" height="9" rx="1" fill="url(#iCam)" stroke="#444" stroke-width="1"/>
<rect x="18.5" y="1257.3" width="3" height="2" fill="#555"/>
<circle cx="23.8" cy="1263.8" r="3.7" fill="#dcdcdc" stroke="#333" stroke-width="1"/><circle cx="23.8" cy="1263.8" r="2.4" fill="#4a4a4a"/><rect x="29" y="1260.6" width="1" height="1" fill="#fff"/>
<rect x="16.5" y="1285.5" width="15" height="13" fill="#f2f2f2" stroke="#555" stroke-width="1"/>
<rect x="18" y="1293" width="5" height="4.5" fill="#999"/><rect x="25" y="1287" width="5" height="4.2" fill="#999"/><rect x="25" y="1293" width="5" height="4.5" fill="#999"/>
<path d="M18.2 1283H23.2V1292.5L20.7 1290.5L18.2 1292.5Z" fill="#3a3a3a"/>
<path d="M19.3 1315.3L23.5 1319.5L19.3 1323.7 M24.5 1315.3L28.7 1319.5L24.5 1323.7" stroke="#444" stroke-width="1.2" fill="none"/>
<rect x="1709" y="1346" width="1.2" height="1.2" fill="#bcb8b3"/>
<rect x="1706" y="1349" width="1.2" height="1.2" fill="#bcb8b3"/>
<rect x="1709" y="1349" width="1.2" height="1.2" fill="#bcb8b3"/>
<rect x="1703" y="1352" width="1.2" height="1.2" fill="#bcb8b3"/>
<rect x="1706" y="1352" width="1.2" height="1.2" fill="#bcb8b3"/>
<rect x="1709" y="1352" width="1.2" height="1.2" fill="#bcb8b3"/>
<rect x="1700" y="1355" width="1.2" height="1.2" fill="#bcb8b3"/>
<rect x="1703" y="1355" width="1.2" height="1.2" fill="#bcb8b3"/>
<rect x="1706" y="1355" width="1.2" height="1.2" fill="#bcb8b3"/>
<rect x="1709" y="1355" width="1.2" height="1.2" fill="#bcb8b3"/>
</svg>
</body></html>
